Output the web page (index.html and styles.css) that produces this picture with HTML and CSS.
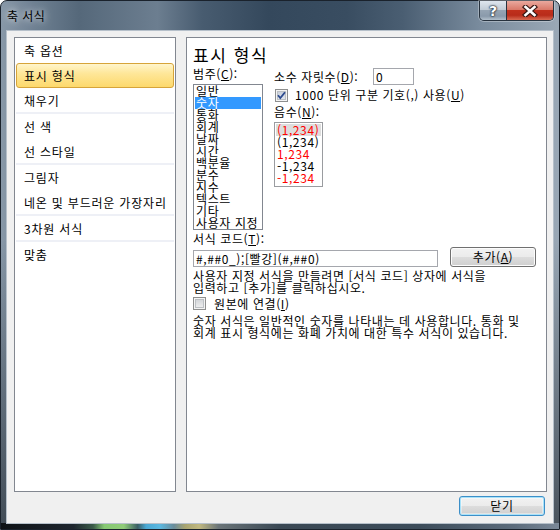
FILE: index.html
```html
<!DOCTYPE html>
<html lang="ko">
<head>
<meta charset="utf-8">
<title>축 서식</title>
<link rel="stylesheet" href="styles.css">
</head>
<body>
<div class="window">
  <div class="titlebar">
    <div class="title">축 서식</div>
    <div class="caption">
      <div class="cbtn help">?</div>
      <div class="cbtn close">
        <svg width="16" height="12" viewBox="0 0 16 12">
          <path d="M3.5 2 L12.5 10 M12.5 2 L3.5 10" stroke="#3a1a16" stroke-width="5" stroke-linecap="square" fill="none"/>
          <path d="M3.5 2 L12.5 10 M12.5 2 L3.5 10" stroke="#ffffff" stroke-width="2.6" stroke-linecap="square" fill="none"/>
        </svg>
      </div>
    </div>
  </div>
  <div class="client">
    <div class="panels">
      <ul class="nav">
        <li class="nav-item">축 옵션</li>
        <li class="nav-item selected">표시 형식</li>
        <li class="nav-item">채우기</li>
        <li class="sep"></li>
        <li class="nav-item">선 색</li>
        <li class="nav-item">선 스타일</li>
        <li class="sep"></li>
        <li class="nav-item">그림자</li>
        <li class="nav-item">네온 및 부드러운 가장자리</li>
        <li class="sep"></li>
        <li class="nav-item">3차원 서식</li>
        <li class="sep"></li>
        <li class="nav-item">맞춤</li>
      </ul>
      <div class="content">
        <h1 class="heading">표시 형식</h1>
        <div class="top">
          <div class="cat">
            <div class="label">범주(<u>C</u>):</div>
            <div class="listbox cat-list">
              <div class="li">일반</div>
              <div class="li sel">숫자</div>
              <div class="li">통화</div>
              <div class="li">회계</div>
              <div class="li">날짜</div>
              <div class="li">시간</div>
              <div class="li">백분율</div>
              <div class="li">분수</div>
              <div class="li">지수</div>
              <div class="li">텍스트</div>
              <div class="li">기타</div>
              <div class="li">사용자 지정</div>
            </div>
          </div>
          <div class="opts">
            <div class="row-dec">
              <div class="dec-label">소수 자릿수(<u>D</u>):</div>
              <div class="textbox dec-input">0</div>
            </div>
            <div class="chk-row">
              <span class="checkbox checked">
                <svg width="13" height="13" viewBox="0 0 13 13">
                  <path d="M3 6.2 L5.3 9 L10 3.2" stroke="#2c4a8e" stroke-width="1.8" fill="none"/>
                </svg>
              </span>
              <span class="chk-text">1000 단위 구분 기호(,) 사용(<u>U</u>)</span>
            </div>
            <div class="label neg-label">음수(<u>N</u>):</div>
            <div class="listbox neg-list">
              <div class="li red grey-sel">(1,234)</div>
              <div class="li">(1,234)</div>
              <div class="li red">1,234</div>
              <div class="li">-1,234</div>
              <div class="li red">-1,234</div>
            </div>
          </div>
        </div>
        <div class="label code-label">서식 코드(<u>T</u>):</div>
        <div class="code-row">
          <div class="textbox code-input">#,##0_);[빨강](#,##0)</div>
          <div class="btn add-btn">추가(<u>A</u>)</div>
        </div>
        <p class="para">사용자 지정 서식을 만들려면 [서식 코드] 상자에 서식을<br>입력하고 [추가]를 클릭하십시오.</p>
        <div class="link-row">
          <span class="checkbox"></span>
          <span>원본에 연결(<u>I</u>)</span>
        </div>
        <p class="para para2">숫자 서식은 일반적인 숫자를 나타내는 데 사용합니다. 통화 및<br>회계 표시 형식에는 화폐 가치에 대한 특수 서식이 있습니다.</p>
      </div>
    </div>
    <div class="footer">
      <div class="btn default">닫기</div>
    </div>
  </div>
</div>
</body>
</html>
```

FILE: styles.css
```css
* { box-sizing: border-box; margin: 0; padding: 0; }
html, body { width: 560px; height: 530px; background: #ffffff; overflow: hidden; }
body {
  font-family: "Noto Sans CJK KR", "Noto Sans", sans-serif;
  font-size: 12px;
  line-height: 12px;
  letter-spacing: 0.6px;
  color: #000;
}
u { text-decoration: underline; text-underline-offset: 1px; }

.window {
  width: 560px;
  height: 530px;
  border: 1px solid #1a222c;
  border-radius: 7px 7px 0 0;
  padding: 0 5px 5px;
  display: flex;
  flex-direction: column;
  background:
    linear-gradient(90deg, #0e1216 0%, #1e262e 13%, #3a5a48 16.5%, #86c872 18.5%, #90cc78 22%, #3a5e64 24.5%, #4aa8d4 26%, #5cb8e0 28.5%, #6a8c9a 31%, #a8a470 33%, #c0b880 35.5%, #6a7478 39%, #3a4854 50%, #3c4c5a 75%, #5c6c7c 92%, #7a8898 100%) left bottom / 100% 6px no-repeat,
    linear-gradient(180deg, rgba(0,0,0,0) 0, rgba(0,0,0,0) 45%, rgba(8,14,20,0.55) 100%),
    linear-gradient(90deg, #8898a8 0%, #6e8092 6%, #55687a 14%, #6c7e90 28%, #485c70 36%, #34485c 48%, #394d61 62%, #4a5e72 72%, #7a8c9e 86%, #9aa8b6 100%);
}

.titlebar {
  height: 29px;
  display: flex;
  justify-content: space-between;
  align-items: flex-start;
}
.title {
  padding-left: 1px;
  line-height: 29px;
  font-size: 12px;
  letter-spacing: 0.4px;
  color: #000;
  text-shadow: 0 0 6px rgba(255,255,255,0.85), 0 0 12px rgba(255,255,255,0.5);
}
.caption {
  display: flex;
  height: 20px;
  border: 1px solid #27323e;
  border-top: none;
  border-radius: 0 0 5px 5px;
  overflow: hidden;
  box-shadow: 0 0 0 1px rgba(255,255,255,0.3);
}
.cbtn {
  height: 19px;
  display: flex;
  align-items: center;
  justify-content: center;
}
.help {
  width: 27px;
  border-right: 1px solid #27323e;
  background: linear-gradient(#dfe6ee 0%, #c2ccd6 45%, #95a4b3 50%, #8a9aab 80%, #b2c0cc 100%);
  color: #fff;
  font-family: "DejaVu Sans", sans-serif;
  font-weight: bold;
  font-size: 14px;
  letter-spacing: 0;
  text-shadow: 0 0 1px #1c2834, 0 0 2px #1c2834, 0 0 2px #1c2834;
}
.close {
  width: 46px;
  background: linear-gradient(#e9a99e 0%, #d97a6a 45%, #c0301c 50%, #b82c1a 75%, #d86a52 100%);
}

.client {
  flex: 1;
  border: 1px solid #b6c0ca;
  background: #f0f0f0;
  padding: 6px 6px 0 7px;
  display: flex;
  flex-direction: column;
}
.panels {
  display: flex;
  gap: 10px;
  height: 455px;
}

.nav {
  width: 162px;
  border: 1px solid #828790;
  background: #fff;
  list-style: none;
  padding: 0 1px;
}
.nav-item {
  height: 25px;
  border: 1px solid transparent;
  border-radius: 3px;
  padding-left: 7px;
  line-height: 23px;
  white-space: nowrap;
  letter-spacing: 0.8px;
}
.nav-item.selected {
  border-color: #d6a43a;
  background: linear-gradient(#fff5cc 0%, #fee79a 40%, #fdd96c 100%);
}
.sep {
  height: 2px;
  margin-top: -1px;
  background: #eef0f6;
}

.content {
  width: 361px;
  border: 1px solid #828790;
  background: #fff;
  padding: 7px 6px 0;
}
.heading {
  font-size: 17px;
  line-height: 20px;
  height: 20px;
  font-weight: normal;
  letter-spacing: 1.6px;
}
.label { height: 12px; white-space: nowrap; }
.top { display: flex; margin-top: 3px; }
.cat { width: 70px; }
.listbox { border: 1px solid #828790; background: #fff; }
.cat-list { margin-top: 4px; height: 146px; padding: 0 1px; }
.li { height: 12px; line-height: 12px; padding-left: 1px; white-space: nowrap; }
.li.sel { background: #3399ff; color: #fff; }
.opts { margin-left: 11px; }
.row-dec { display: flex; align-items: center; height: 17px; }
.dec-label { width: 99px; white-space: nowrap; }
.textbox {
  border: 1px solid #a5a7ad;
  background: #fff;
  height: 17px;
  line-height: 15px;
  padding-left: 2px;
  white-space: nowrap;
}
.dec-input { width: 41px; }
.chk-row { display: flex; align-items: center; height: 14px; margin-top: 3px; white-space: nowrap; }
.checkbox {
  width: 13px;
  height: 13px;
  flex: none;
  border: 1px solid #8e8f8f;
  background: linear-gradient(#cdd0d4, #f3f3f3);
  box-shadow: inset 0 0 0 1px #f4f4f4, inset 0 0 0 2px #bcc0c4;
  display: inline-block;
  position: relative;
}
.checkbox svg { position: absolute; left: -1px; top: -1px; }
.checkbox.checked { background: linear-gradient(#c2cad8, #e8ecf2); margin-left: 1px; }
.chk-text { margin-left: 7px; }
.neg-label { margin-top: 4px; }
.neg-list { margin-top: 4px; width: 49px; height: 65px; padding: 1px 1px; border-color: #9a9ca0; }
.red { color: #ff0000; }
.grey-sel { background: #dddddd; }

.code-label { margin-top: 3px; }
.code-row { display: flex; align-items: flex-end; height: 20px; margin-top: 2px; }
.code-input { width: 245px; }
.btn {
  width: 86px;
  height: 20px;
  border: 1px solid #707070;
  border-radius: 3px;
  background: linear-gradient(#f2f2f2 0%, #ebebeb 50%, #dddddd 50%, #cfcfcf 100%);
  box-shadow: inset 0 0 0 1px #fcfcfc;
  text-align: center;
  line-height: 18px;
}
.add-btn { margin-left: 12px; }
.para { margin-top: 3px; line-height: 12px; white-space: nowrap; }
.link-row { margin-top: 3px; display: flex; align-items: center; height: 13px; }
.link-row .checkbox { margin-right: 8px; }
.para2 { margin-top: 5px; }

.footer {
  display: flex;
  justify-content: flex-end;
  margin-top: 4px;
  padding-right: 2px;
}
.btn.default {
  border-color: #3c8fc8;
  box-shadow: inset 0 0 0 1px #a8e2fa, inset 0 0 0 2px rgba(255,255,255,0.4);
}
```
